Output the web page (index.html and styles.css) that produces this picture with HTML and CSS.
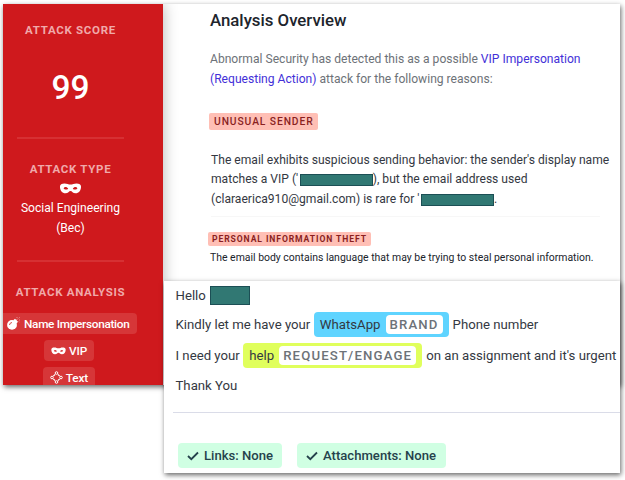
FILE: index.html
```html
<!DOCTYPE html>
<html lang="en">

<head>
    <meta charset="utf-8">
    <meta name="viewport" content="width=device-width, initial-scale=1">
    <title>Analysis Overview</title>
    <link rel="stylesheet" href="styles.css">
</head>

<body>
    <!-- shared icons -->
    <svg class="sprite">
        <symbol id="mask" viewBox="0 0 24 12">
            <path fill="currentColor" fill-rule="evenodd" d="M5.5 0.5C8 0.5 10 1.7 12 1.7S16 0.5 18.500 0.500C21.500 0.500 23.500 1.500 23.500 4C23.500 8 21 11.200 17.500 11.200C14.500 11.200 13.700 8.700 12 8.700S9.500 11.200 6.500 11.200C3 11.200 0.500 8 0.500 4C0.500 1.500 2.500 0.500 5.500 0.500ZM4.500 5.600C5.300 7.500 8 7.700 9.500 6.200C8.300 4.200 5.500 3.900 4.500 5.600ZM19.500 5.600C18.500 3.900 15.700 4.200 14.500 6.200C16 7.700 18.700 7.500 19.500 5.600Z"/>
        </symbol>
    </svg>

    <main class="report">
        <aside class="sidebar">
            <section class="block score">
                <h2>ATTACK SCORE</h2>
                <div class="number">99</div>
            </section>
            <section class="block type">
                <h2>ATTACK TYPE</h2>
                <svg class="mask"><use href="#mask"/></svg>
                <p>Social Engineering<br>(Bec)</p>
            </section>
            <section class="block analysis">
                <h2>ATTACK ANALYSIS</h2>
                <div class="chip name">
                    <svg class="bomb" viewBox="0 0 13 13">
                        <circle cx="5" cy="7.900" r="4.900" fill="currentColor"/>
                        <path d="M6.300 3.300L8 1.800L11 4.800L9.500 6.500Z" fill="currentColor"/>
                        <path d="M2.500 8A2.700 2.700 0 0 1 5 5.500" fill="none" stroke="#d43436" stroke-width="0.900"/>
                        <path d="M9 3.500L10.500 2.200M10 0.300V1M12.500 0.500L11.800 1.300M12.300 3H13M11.700 4.500L12.300 5" fill="none" stroke="currentColor" stroke-width="0.600"/>
                    </svg>
                    <span>Name Impersonation</span>
                </div>
                <div class="chip vip"><svg class="mask"><use href="#mask"/></svg><span>VIP</span></div>
                <div class="chip text">
                    <svg class="nodes" viewBox="0 0 13 13" fill="none" stroke="currentColor">
                        <path d="M5.200 3.300L3.300 5.200M7.800 3.300L9.700 5.200M3.300 7.800L5.200 9.700M9.700 7.800L7.800 9.700" stroke-width="1.200"/>
                        <circle cx="6.500" cy="2" r="1.300"/>
                        <circle cx="2" cy="6.500" r="1.300"/>
                        <circle cx="11" cy="6.500" r="1.300"/>
                        <circle cx="6.500" cy="11" r="1.300"/>
                    </svg>
                    <span>Text</span>
                </div>
            </section>
        </aside>

        <section class="overview">
            <h1>Analysis Overview</h1>
            <p class="intro">Abnormal Security has detected this as a possible <a>VIP Impersonation<br>(Requesting Action)</a> attack for the following reasons:</p>
            <div class="label unusual">UNUSUAL SENDER</div>
            <p class="reason">The email exhibits suspicious sending behavior: the sender's display name<br>
                matches a VIP ('<i class="redacted"></i>), but the email address used<br>
                (claraerica910@gmail.com) is rare for '<i class="redacted"></i>.</p>
            <div class="label theft">PERSONAL INFORMATION THEFT</div>
            <p class="detail">The email body contains language that may be trying to steal personal information.</p>
        </section>
    </main>

    <!-- email preview lies over the report -->
    <article class="email">
        <div class="body">
            <p>Hello<i class="redacted"></i></p>
            <p>Kindly let me have your<mark class="blue"><span>WhatsApp</span><b>BRAND</b></mark>Phone number</p>
            <p>I need your<mark class="lime"><span>help</span><b>REQUEST/ENGAGE</b></mark>on an assignment and it's urgent</p>
            <p>Thank You</p>
        </div>
        <footer>
            <div class="check links"><svg viewBox="0 0 12 10"><path d="M1 5L4.300 8.200L11 1.500"/></svg><span>Links: None</span></div>
            <div class="check files"><svg viewBox="0 0 12 10"><path d="M1 5L4.300 8.200L11 1.500"/></svg><span>Attachments: None</span></div>
        </footer>
    </article>
</body>

</html>
```
FILE: styles.css
```css
* {
    box-sizing: border-box;
}

body {
    margin: 0;
    height: 480px;
    padding: 4px 5px 0 3px;
    position: relative;
    overflow: hidden;
    background: white;
    color: #343842;
    font-family: Roboto, "Liberation Sans", sans-serif;
    font-size: 12.1px;
    white-space: nowrap;
}

h1, h2, p {
    margin: 0;
}

.sprite {
    position: absolute;
    width: 0;
    height: 0;
}

.report {
    display: flex;
    width: 617px;
    height: 381px;
    overflow: hidden;
    background: white;
}

.report, .email {
    box-shadow: 1px 2px 5px rgba(0,0,0,0.6);
}

/* left column */
.sidebar {
    width: 160px;
    flex: none;
    padding-right: 25px;
    background: #cf191d;
    box-shadow: 0 0 14px rgba(0,0,0,0.3);
    color: white;
    text-align: center;
}

.block {
    display: flex;
    flex-direction: column;
    align-items: center;
}

.block h2 {
    font-size: 11.5px;
    line-height: 16px;
    font-weight: 700;
    letter-spacing: 0.7px;
    color: #f0a9aa;
}

.score, .type {
    width: 107px;
    margin: 0 auto;
    border-bottom: 2px solid #d63033;
}

.score {
    height: 135px;
    padding-top: 18px;
}

.number {
    margin-top: 30px;
    font-size: 33.5px;
    line-height: 40px;
    font-weight: 500;
}

.type {
    height: 123px;
    padding-top: 22px;
}

.type .mask {
    width: 23px;
    height: 11px;
    margin-top: 6px;
}

.type p {
    margin-top: 5px;
    line-height: 19.5px;
}

.analysis {
    padding-top: 22px;
}

.analysis h2 {
    margin-bottom: 13px;
}

.chip {
    display: flex;
    align-items: center;
    justify-content: center;
    width: 50px;
    height: 21px;
    margin: 0 3px 6px 0;
    gap: 3px;
    border-radius: 4px;
    background: #d63638;
    font-size: 11.8px;
    font-weight: 500;
    letter-spacing: -0.1px;
}

.chip.name {
    width: 134px;
    padding-left: 4px;
    align-self: flex-start;
    justify-content: flex-start;
    border-radius: 0 4px 4px 0;
    gap: 4px;
    letter-spacing: -0.3px;
}

.chip.text {
    width: 52px;
}

.bomb, .nodes {
    width: 13px;
    height: 13px;
}

.chip .mask {
    width: 15px;
    height: 8px;
}

/* findings */
.overview {
    padding-left: 47px;
}

.overview h1 {
    padding-top: 5px;
    font-size: 16.8px;
    line-height: 23px;
    font-weight: 500;
    color: #20242c;
}

.intro {
    margin-top: 17px;
    line-height: 20px;
    color: #6d7278;
}

.intro a {
    color: #4330d8;
}

.label {
    width: 109px;
    height: 17px;
    margin-left: -1px;
    padding-left: 5px;
    border-radius: 2px;
    background: #ffbfb5;
    color: #8a1f1f;
    font-size: 10.3px;
    line-height: 17px;
    font-weight: 500;
    letter-spacing: 0.9px;
}

.unusual {
    margin-top: 24px;
}

.reason {
    width: 389px;
    height: 66px;
    margin: 21px 0 0 1px;
    line-height: 19.3px;
    border-bottom: 1px solid #f7f7f7;
}

.redacted {
    display: inline-block;
    width: 73px;
    height: 12px;
    margin-left: 1.5px;
    vertical-align: -3px;
    background: #317873;
    border: 1px solid #1c4f55;
}

.theft {
    width: 163px;
    height: 14px;
    margin: 15px 0 0 -2px;
    padding-left: 4px;
    font-size: 8.6px;
    line-height: 14px;
    font-weight: 700;
}

.detail {
    margin-top: 3px;
    font-size: 10.44px;
    line-height: 17px;
    color: #20242c;
}

/* email preview */
.email {
    position: absolute;
    left: 164px;
    top: 281px;
    width: 456px;
    height: 192px;
    background: white;
    font-size: 13.2px;
}

.body {
    height: 132px;
    margin-left: 9px;
    padding-left: 2.5px;
    border-bottom: 1px solid #dadce8;
}

.body p {
    display: flex;
    align-items: center;
    height: 30.7px;
}

.body p:first-child {
    height: 28px;
}

.body .redacted {
    width: 40px;
    height: 19px;
    margin-left: 4.5px;
}

mark {
    display: flex;
    align-items: center;
    height: 25px;
    margin: 0 4px 0 3.5px;
    padding: 0 6px;
    gap: 5px;
    border-radius: 4px;
    color: inherit;
}

mark b {
    height: 19px;
    padding: 0 4px;
    border-radius: 4px;
    background: white;
    color: #6d7278;
    font-weight: 500;
    line-height: 19px;
    letter-spacing: 1.15px;
}

.blue {
    background: #5fd4ff;
}

.lime {
    background: #e0ff5c;
}

footer {
    display: flex;
    gap: 15px;
    padding: 30px 0 0 14px;
}

.check {
    display: flex;
    align-items: center;
    width: 104px;
    height: 25px;
    padding-left: 9px;
    gap: 5px;
    border-radius: 4px;
    background: #d0ffe3;
    color: #25424c;
    font-size: 13.1px;
    font-weight: 500;
}

.check.files {
    width: 149px;
}

.check svg {
    width: 12px;
    height: 10px;
    fill: none;
    stroke: currentColor;
    stroke-width: 1.8;
}
```
